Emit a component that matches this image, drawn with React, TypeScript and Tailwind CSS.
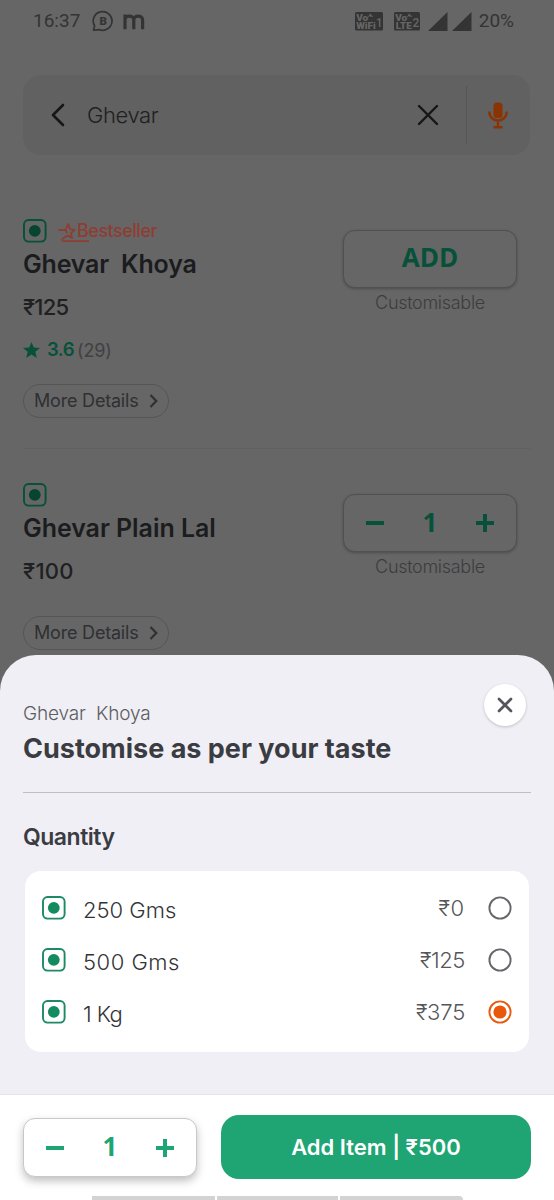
import { useState } from "react";

interface Option {
  name: string;
  price: number;
  nameClass: string;
  priceClass: string;
}

const options: Option[] = [
  { name: "250 Gms", price: 0, nameClass: "tracking-[0px]", priceClass: "tracking-[0.8px]" },
  { name: "500 Gms", price: 125, nameClass: "tracking-[0.5px]", priceClass: "tracking-[-0.4px]" },
  { name: "1 Kg", price: 375, nameClass: "tracking-[-0.6px]", priceClass: "tracking-[-0.2px]" },
];

function VegIcon({ color, dot }: { color: string; dot: string }) {
  return (
    <svg className="w-6 h-6 shrink-0" viewBox="0 0 24 24" fill="none">
      <rect x="1" y="1" width="21.6" height="21.6" rx="4.5" stroke={color} strokeWidth="1.9" />
      <circle cx="11.8" cy="11.8" r="5.9" fill={dot} />
    </svg>
  );
}

function MoreDetails() {
  return (
    <button className="flex items-center w-[146px] h-[34px] pl-[10px] rounded-full border border-[#555555] text-[#2f3032]">
      <span className="text-[18px] leading-none tracking-[-0.2px] whitespace-nowrap">More Details</span>
      <svg className="ml-auto mr-[10px] w-[9px] h-[14px] shrink-0" viewBox="0 0 9 14" fill="none">
        <path d="M1.5 1L7.3 7L1.5 13" stroke="currentColor" strokeWidth="2.2" />
      </svg>
    </button>
  );
}

function Stepper({ count, onChange }: { count: number; onChange: (n: number) => void }) {
  return (
    <>
      <button onClick={() => onChange(Math.max(1, count - 1))} className="w-[18px] h-[18px] flex items-center">
        <span className="w-[18px] h-1 bg-current" />
      </button>
      <span className="font-['Open_Sans',sans-serif] font-bold text-[26px] leading-none -mt-[3px]">{count}</span>
      <button onClick={() => onChange(count + 1)} className="w-[18px] h-[18px]">
        <svg viewBox="0 0 18 18" className="w-[18px] h-[18px]">
          <path d="M7 0h4v7h7v4h-7v7H7v-7H0V7h7z" fill="currentColor" />
        </svg>
      </button>
    </>
  );
}

function StatusBar() {
  return (
    <div className="flex items-center h-[42px] pl-[33px] pr-10 text-[#343434] font-[Roboto,sans-serif] text-[19px]">
      <span>16:37</span>
      <svg className="ml-[12px] w-[22px] h-[22px]" viewBox="0 0 22 22" fill="none">
        <path d="M1.5 20.2L2.6 15.8A9.4 9.3 0 1 1 7.2 19.6Z" stroke="currentColor" strokeWidth="1.7" strokeLinejoin="round" />
        <text x="11.2" y="14.6" textAnchor="middle" fontSize="11.5" fontWeight="900" fill="currentColor">B</text>
      </svg>
      <svg className="ml-[9px] w-[22px] h-[17px]" viewBox="0 0 22 17" fill="none">
        <path d="M2 16.2V7C2 1.8 10.8 1.8 10.8 7V16.2M10.8 7C10.8 1.8 19.6 1.8 19.6 7V16.2M2 1.5V8" stroke="currentColor" strokeWidth="3.2" />
      </svg>
      <svg className="ml-auto w-7 h-[19px]" viewBox="0 0 28 19" fontFamily="Roboto, sans-serif" fontWeight="900" fill="#666666">
        <rect width="28" height="18.5" rx="1.5" fill="currentColor" />
        <text x="1.2" y="8.6" fontSize="9.5" textLength="12" lengthAdjust="spacingAndGlyphs">Vo</text>
        <path d="M13.5 5L15.4 1.8L16 5M16.5 3L17.5 5" stroke="#666666" fill="none" />
        <text x="1.2" y="17" fontSize="9.3" textLength="19.5" lengthAdjust="spacingAndGlyphs">WiFi</text>
        <text x="21" y="14.5" fontSize="13" fontWeight="500" textLength="6.5" lengthAdjust="spacingAndGlyphs">1</text>
      </svg>
      <svg className="ml-[11px] w-[26px] h-[19px]" viewBox="0 0 26 19" fontFamily="Roboto, sans-serif" fontWeight="900" fill="#666666">
        <rect width="26" height="18.5" rx="1.5" fill="currentColor" />
        <text x="1.2" y="8.6" fontSize="9.5" textLength="12" lengthAdjust="spacingAndGlyphs">Vo</text>
        <path d="M13.5 5L15.4 1.8L16 5M16.5 3L17.5 5" stroke="#666666" fill="none" />
        <text x="1.8" y="17" fontSize="9.3" textLength="16" lengthAdjust="spacingAndGlyphs">LTE</text>
        <text x="18.4" y="14.5" fontSize="12.5" fontWeight="500" textLength="6.8" lengthAdjust="spacingAndGlyphs">2</text>
      </svg>
      <svg className="ml-2 w-5 h-[19px]" viewBox="0 0 20 19">
        <path d="M0 19L19.5 0V19Z" fill="currentColor" />
      </svg>
      <svg className="ml-1 w-5 h-[19px]" viewBox="0 0 20 19">
        <path d="M0 19L19.5 0V19Z" fill="currentColor" />
      </svg>
      <span className="ml-[7px]">20%</span>
    </div>
  );
}

function SearchBar() {
  return (
    <div className="flex items-center mt-[33px] ml-[23px] mr-6 h-20 rounded-[18px] bg-[#616161]">
      <svg className="ml-7 w-[14px] h-6" viewBox="0 0 14 24" fill="none">
        <path d="M12 2L2 12L12 22" stroke="#161616" strokeWidth="2.6" strokeLinecap="round" strokeLinejoin="round" />
      </svg>
      <span className="ml-[22px] text-[22px] font-light text-[#1f2021] tracking-[-0.4px]">Ghevar</span>
      <svg className="ml-auto w-[22px] h-[22px]" viewBox="0 0 22 22">
        <path d="M2 2L20 20M20 2L2 20" stroke="#161616" strokeWidth="2.4" strokeLinecap="round" />
      </svg>
      <div className="ml-[27px] w-[1.5px] h-[58px] bg-[#555555]" />
      <svg className="ml-[21px] mr-[22px] w-5 h-[27px]" viewBox="0 0 20 27" fill="none">
        <rect x="5.4" y="0.5" width="9.2" height="15.5" rx="3.6" fill="#8a3405" />
        <path d="M1.3 9.5C1.3 21.5 18.7 21.5 18.7 9.5M10 18.5V25M5.5 25.2H14.5" stroke="#8a3405" strokeWidth="2.4" />
      </svg>
    </div>
  );
}

export default function App() {
  const [selected, setSelected] = useState(2);
  const [count, setCount] = useState(1);
  const [cartCount, setCartCount] = useState(1);

  return (
    <div className="relative w-[554px] h-[1200px] overflow-hidden bg-[#666666] font-[Inter,sans-serif]">
      <StatusBar />
      <SearchBar />

      {/* Item 1 */}
      <div className="flex justify-between mt-16 ml-[23px] mr-6 h-[230px] border-b border-[#606060]">
        <div>
          <div className="flex items-center h-6">
            <VegIcon color="#07513a" dot="#064630" />
            <svg className="ml-[11px] w-[31px] h-[22px] mt-1 overflow-visible" viewBox="0 0 31 22" fill="none">
              <path d="M0.5 8H7.5L10.3 2L12 7.2L16.5 8L13 11L14 16L9.8 13.5L5.2 16.2C3 17.8 4.2 19.2 7 19.2H31M7.5 8L9 11" stroke="#8f3d33" strokeWidth="1.8" strokeLinejoin="round" />
            </svg>
            <span className="-ml-[12px] -mt-[2px] text-[18px] font-medium text-[#8f3d33] tracking-[-0.5px]">Bestseller</span>
          </div>
          <h2 className="h-[42px] leading-[42px] text-[25px] font-semibold text-[#1b1c1e] tracking-[-0.2px] whitespace-pre">Ghevar  Khoya</h2>
          <p className="h-[46px] leading-[45px] text-[22px] font-medium text-[#1f2022] tracking-[-0.8px]">₹125</p>
          <div className="flex items-center h-[38px]">
            <svg className="w-[17px] h-4" viewBox="0 0 17 16">
              <path d="M8.5 0L10.8 5.4L17 6L12.3 9.8L13.8 16L8.5 12.6L3.2 16L4.7 9.8L0 6L6.2 5.4Z" fill="#07513a" />
            </svg>
            <span className="ml-[7px] text-[18.5px] font-semibold text-[#07513a] tracking-[-0.5px]">3.6</span>
            <span className="ml-[3px] text-[18px] text-[#404143] tracking-[-0.2px]">(29)</span>
          </div>
          <div className="mt-[15px]">
            <MoreDetails />
          </div>
        </div>
        <div className="mt-[11px] mr-[13px] w-[174px] text-center">
          <button className="w-full h-[58px] pb-1 rounded-[12px] border border-[#505050] shadow-[0_1px_3px_rgba(0,0,0,0.25)] bg-[#666666] font-['Open_Sans',sans-serif] font-bold text-[26px] leading-none text-[#07513a]">
            ADD
          </button>
          <p className="h-7 leading-[30px] text-[18px] font-light text-[#3c3d3f] tracking-[-0.3px]">Customisable</p>
        </div>
      </div>

      {/* Item 2 */}
      <div className="flex justify-between mt-[34px] ml-[23px] mr-6">
        <div>
          <VegIcon color="#07513a" dot="#064630" />
          <h2 className="h-[42px] leading-[42px] text-[25px] font-semibold text-[#1b1c1e] tracking-[-0.05px]">Ghevar Plain Lal</h2>
          <p className="h-[46px] leading-[45px] text-[22px] font-medium text-[#1f2022] tracking-[0.3px]">₹100</p>
          <div className="mt-[21px]">
            <MoreDetails />
          </div>
        </div>
        <div className="mt-[11px] mr-[13px] w-[174px] text-center">
          <div className="flex items-center justify-between h-[58px] px-[22px] rounded-[12px] border border-[#505050] shadow-[0_1px_3px_rgba(0,0,0,0.25)] bg-[#666666] text-[#07513a]">
            <Stepper count={cartCount} onChange={setCartCount} />
          </div>
          <p className="h-7 leading-[30px] text-[18px] font-light text-[#3c3d3f] tracking-[-0.3px]">Customisable</p>
        </div>
      </div>

      {/* Bottom sheet */}
      <div className="absolute inset-x-0 bottom-0 h-[545px] flex flex-col rounded-t-[36px] bg-[#f0eff5] overflow-hidden">
        <div className="flex justify-between mx-[23px] h-[138px] border-b border-[#bfbfc4]">
          <div className="pt-[46px]">
            <p className="h-[26px] leading-[26px] text-[19px] font-light text-[#5c5d61] tracking-[-0.15px] whitespace-pre">Ghevar  Khoya</p>
            <h1 className="h-[44px] leading-[44px] text-[27px] font-bold text-[#3a3c42] whitespace-nowrap">Customise as per your taste</h1>
          </div>
          <button className="flex items-center justify-center mt-[29px] mr-[5px] w-[42px] h-[42px] rounded-full bg-white shadow-[0_1px_3px_rgba(0,0,0,0.2)]">
            <svg className="w-4 h-4" viewBox="0 0 16 16">
              <path d="M2 2L14 14M14 2L2 14" stroke="#55565a" strokeWidth="2.7" strokeLinecap="round" />
            </svg>
          </button>
        </div>

        <h3 className="ml-[23px] mt-[29px] h-[30px] leading-[30px] text-[23px] font-semibold text-[#3a3c42] tracking-[-0.5px]">Quantity</h3>
        <div className="mt-[19px] mx-[25px] h-[181px] pt-[11px] rounded-[16px] bg-white">
          {options.map((option, i) => (
            <label key={option.name} className="flex items-center h-[52px] pl-[17px] pr-[17px] cursor-pointer">
              <VegIcon color="#1c8a63" dot="#148a5f" />
              <span className={`ml-[17px] pt-[4px] text-[22px] font-light text-[#333438] ${option.nameClass}`}>{option.name}</span>
              <span className={`ml-auto mr-[23px] text-[22px] font-light text-[#55565a] ${option.priceClass}`}>₹{option.price}</span>
              <input type="radio" name="quantity" checked={selected === i} onChange={() => setSelected(i)} className="sr-only" />
              <svg className="w-6 h-6" viewBox="0 0 24 24" fill="none">
                <circle cx="12" cy="12" r="10.6" stroke={selected === i ? "#e65a12" : "#66676b"} strokeWidth="1.9" />
                {selected === i && <circle cx="12" cy="12" r="6.6" fill="#e9570a" />}
              </svg>
            </label>
          ))}
        </div>

        <div className="mt-auto h-[106px] border-t border-[#e6e6ea] bg-white">
          <div className="flex px-[23px] pt-5">
            <div className="flex items-center justify-between mt-[3px] w-[174px] h-[59px] px-[22px] rounded-[12px] border border-[#c8c8c8] shadow-[0_4px_8px_rgba(0,0,0,0.25)] bg-white text-[#1fa573]">
              <Stepper count={count} onChange={setCount} />
            </div>
            <button className="ml-auto w-[310px] h-16 rounded-[18px] bg-[#1fa573] text-white text-[22px] font-semibold">
              Add Item | ₹500
            </button>
          </div>
          <div className="flex gap-[2px] mt-[17px] ml-[92px]">
            <span className="w-[123px] h-1 bg-[#d3d3d3]" />
            <span className="w-[121px] h-1 bg-[#d3d3d3]" />
            <span className="w-[123px] h-1 rounded-tr-sm bg-[#d3d3d3]" />
          </div>
        </div>
      </div>
    </div>
  );
}
